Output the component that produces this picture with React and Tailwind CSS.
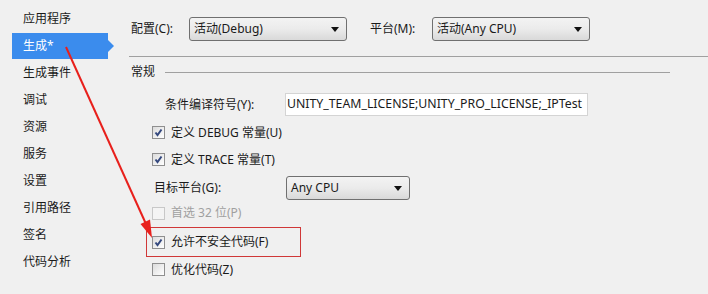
import React from 'react';

const navItems = ['应用程序', '生成*', '生成事件', '调试', '资源', '服务', '设置', '引用路径', '签名', '代码分析'];

const Check = ({ checked, disabled }) => (
  <span className={`flex items-center justify-center w-[13px] h-[13px] border ${disabled ? 'border-[#c8c8c8] bg-[#f4f4f4]' : 'border-[#8f8f8f] bg-gradient-to-br from-[#dcdcdc] to-[#ffffff]'}`}>
    {checked && (
      <svg width="9" height="9" viewBox="0 0 9 9">
        <path d="M1.5 4.5 L3.5 7 L7.5 1.5" fill="none" stroke="#34487e" strokeWidth="2" />
      </svg>
    )}
  </span>
);

const Combo = ({ value, width }) => (
  <div className={`${width} h-[24px] flex items-center justify-between pl-[4px] pr-[7px] border border-[#707070] rounded-[3px] bg-gradient-to-b from-[#f3f3f3] via-[#ebebeb] to-[#d9d9d9]`}>
    <span>{value}</span>
    <svg width="8" height="5" viewBox="0 0 8 5"><path d="M0 0 H8 L4 5 Z" fill="#111" /></svg>
  </div>
);

const CheckRow = ({ label, checked, disabled }) => (
  <div className="flex items-center gap-[6px]">
    <Check checked={checked} disabled={disabled} />
    <span className={disabled ? 'text-[#a0a0a0]' : ''}>{label}</span>
  </div>
);

export default function App() {
  return (
    <div className="relative w-[708px] h-[294px] overflow-hidden bg-[#f0f0f0] text-[12px] text-[#1a1a1a] flex" style={{ fontFamily: '"Noto Sans", "Noto Sans CJK SC", sans-serif' }}>
      <div className="w-[114px] pt-[5px] flex flex-col">
        {navItems.map((item, i) => (
          <div key={item} className="h-[27px] flex items-center">
            {i === 1 ? (
              <div className="flex items-center">
                <div className="w-[96px] h-[26px] ml-[12px] pl-[11px] flex items-center bg-[#3b8ced] text-white">{item}</div>
                <svg width="6" height="12" viewBox="0 0 6 12"><path d="M0 0 L6 6 L0 12 Z" fill="#3b8ced" /></svg>
              </div>
            ) : (
              <span className="pl-[23px]">{item}</span>
            )}
          </div>
        ))}
      </div>

      <div className="flex-1 flex flex-col pt-[17px]">
        <div className="flex items-center pl-[17px]">
          <span className="w-[58px]">配置(C):</span>
          <Combo value="活动(Debug)" width="w-[158px]" />
          <span className="ml-[23px] w-[62px]">平台(M):</span>
          <Combo value="活动(Any CPU)" width="w-[158px]" />
        </div>
        <div className="mt-[15px] ml-[15px] h-px bg-[#a0a0a0]" />
        <div className="flex items-center h-[30px] pl-[17px] pr-[38px] gap-[10px]">
          <span>常规</span>
          <div className="flex-1 h-px bg-[#a0a0a0]" />
        </div>
        <div className="flex items-center mt-[6px] h-[23px] pl-[51px]">
          <span className="w-[120px]">条件编译符号(Y):</span>
          <div className="w-[303px] h-[23px] border border-[#d4d4d4] bg-white flex items-center overflow-hidden pl-[1px] whitespace-nowrap text-[12.3px]">
            UNITY_TEAM_LICENSE;UNITY_PRO_LICENSE;_IPTest
          </div>
        </div>
        <div className="flex flex-col pl-[38px]">
          <div className="h-[27px] mt-[3px] flex items-center"><CheckRow label="定义 DEBUG 常量(U)" checked /></div>
          <div className="h-[27px] flex items-center"><CheckRow label="定义 TRACE 常量(T)" checked /></div>
          <div className="h-[22px] mt-[4px] flex items-center">
            <span className="ml-[2px] w-[132px]">目标平台(G):</span>
            <Combo value="Any CPU" width="w-[124px] h-[22px]" />
          </div>
          <div className="h-[28px] flex items-center"><CheckRow label="首选 32 位(P)" disabled /></div>
          <div className="w-[155px] h-[30px] -ml-[6px] pl-[5px] border border-[#d03838] flex items-center"><CheckRow label="允许不安全代码(F)" checked /></div>
          <div className="h-[25px] flex items-center"><CheckRow label="优化代码(Z)" /></div>
        </div>
      </div>

      <svg className="absolute left-0 top-0 pointer-events-none" width="708" height="294" viewBox="0 0 708 294">
        <line x1="66" y1="47" x2="146" y2="224" stroke="#e8201c" strokeWidth="2" />
        <path d="M152 238 L150 219.5 L140.5 224 Z" fill="#e8201c" />
      </svg>
    </div>
  );
}
